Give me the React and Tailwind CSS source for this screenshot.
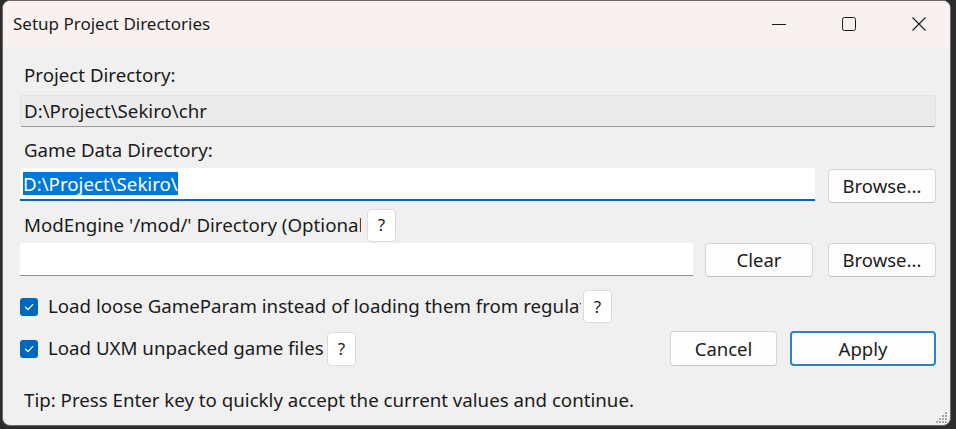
import React from "react";

const font = { fontFamily: '"Noto Sans", "Open Sans", sans-serif' };

function Btn({ children, className = "" }) {
  return (
    <div
      className={
        "flex items-center justify-center rounded-[4px] border border-[#d6d6d6] border-b-[#c4c4c4] bg-[#fdfdfd] text-[18.5px] text-[#1b1b1b] " +
        className
      }
    >
      {children}
    </div>
  );
}

function Help({ className = "" }) {
  return (
    <div
      className={
        "flex h-[33px] w-[29px] shrink-0 items-center justify-center rounded-[4px] border border-[#dcdcdc] bg-white text-[17px] text-[#1b1b1b] " +
        className
      }
    >
      ?
    </div>
  );
}

function Check() {
  return (
    <div className="flex h-[18px] w-[18px] shrink-0 items-center justify-center rounded-[3px] bg-[#0067c0]">
      <svg width="12" height="12" viewBox="0 0 12 12" fill="none">
        <path d="M2.5 6.2 L5 8.6 L9.6 3.6" stroke="white" strokeWidth="1.3" strokeLinecap="round" strokeLinejoin="round" />
      </svg>
    </div>
  );
}

export default function App() {
  return (
    <div className="h-[429px] w-[956px] bg-[#2c2c2c] pb-[3px] pl-[2px] pr-[5px]" style={font}>
      <div className="flex h-full flex-col overflow-hidden rounded-[8px] border border-[#6b6b6b] bg-[#f0f0f0]">
        {/* title bar */}
        <div className="flex h-[46px] shrink-0 items-center bg-[#f9f1ef]">
          <div className="pl-[10px] text-[17px] text-[#1b1b1b]">Setup Project Directories</div>
          <div className="ml-auto flex h-full pr-[1px]">
            <div className="flex h-full w-[70px] items-center justify-center pl-[10px]">
              <svg width="16" height="16" viewBox="0 0 16 16">
                <path d="M1 8.5 H15" stroke="#1b1b1b" strokeWidth="1" />
              </svg>
            </div>
            <div className="flex h-full w-[70px] items-center justify-center pl-[10px]">
              <svg width="16" height="16" viewBox="0 0 16 16">
                <rect x="1.5" y="1.5" width="13" height="13" rx="2" fill="none" stroke="#1b1b1b" strokeWidth="1" />
              </svg>
            </div>
            <div className="flex h-full w-[70px] items-center justify-center pl-[10px]">
              <svg width="16" height="16" viewBox="0 0 16 16">
                <path d="M1.5 1.5 L14.5 14.5 M14.5 1.5 L1.5 14.5" stroke="#1b1b1b" strokeWidth="1.1" />
              </svg>
            </div>
          </div>
        </div>

        {/* body */}
        <div className="relative flex flex-1 flex-col pl-[17px] pr-[14px] text-[18.7px] text-[#1b1b1b]">
          <div className="mt-[15px] flex h-[26px] items-center pl-[4px]">Project Directory:</div>
          <div className="mt-[7px] flex h-[32px] items-center rounded-[3px] border border-[#e2e2e2] border-b-[#9a9a9a] bg-[#ebebeb] pl-[3px]">
            D:\Project\Sekiro\chr
          </div>
          <div className="mt-[10px] flex h-[26px] items-center pl-[4px]">Game Data Directory:</div>
          <div className="mt-[5px] flex h-[35px] items-start">
            <div className="flex h-[33px] flex-1 items-center rounded-t-[3px] border-b-2 border-[#0067c0] bg-white pl-[3px]">
              <span className="bg-[#0078d7] leading-[23px] text-white">D:\Project\Sekiro\</span>
            </div>
            <Btn className="ml-[13px] mt-[1px] h-[34px] w-[108px]">Browse...</Btn>
          </div>
          <div className="mt-[7px] flex h-[30px] items-center">
            <span className="w-[341px] shrink-0 overflow-hidden whitespace-nowrap pl-[4px]">ModEngine '/mod/' Directory (Optional)</span>
            <Help className="ml-[6px] h-[30px] w-[24px]" />
          </div>
          <div className="mt-[3px] flex h-[34px] items-start">
            <div className="h-[33px] flex-1 rounded-t-[3px] border-b border-[#8d8d8d] bg-white"></div>
            <Btn className="ml-[12px] h-[34px] w-[108px]">Clear</Btn>
            <Btn className="ml-[15px] h-[34px] w-[108px]">Browse...</Btn>
          </div>
          <div className="mt-[13px] flex h-[33px] items-center">
            <Check />
            <span className="ml-[10px] w-[533px] shrink-0 overflow-hidden whitespace-nowrap">
              Load loose GameParam instead of loading them from regulation
            </span>
            <Help className="ml-[2px]" />
          </div>
          <div className="mt-[8px] flex h-[35px] items-center">
            <Check />
            <span className="ml-[10px] w-[277px] shrink-0 overflow-hidden whitespace-nowrap">Load UXM unpacked game files</span>
            <Help className="ml-[2px] h-[34px]" />
            <Btn className="ml-auto h-[35px] w-[107px]">Cancel</Btn>
            <Btn className="ml-[13px] h-[35px] w-[146px] border-2 !border-[#2f80d0]">Apply</Btn>
          </div>
          <div className="mt-[22px] flex h-[24px] items-center pl-[4px]">
            Tip: Press Enter key to quickly accept the current values and continue.
          </div>
          <svg className="absolute bottom-[2px] right-[2px]" width="12" height="12" viewBox="0 0 12 12">
            <g fill="#a8a8a8">
              <rect x="9" y="1" width="2" height="2" />
              <rect x="6" y="4" width="2" height="2" />
              <rect x="9" y="4" width="2" height="2" />
              <rect x="3" y="7" width="2" height="2" />
              <rect x="6" y="7" width="2" height="2" />
              <rect x="9" y="7" width="2" height="2" />
              <rect x="0" y="10" width="2" height="2" />
              <rect x="3" y="10" width="2" height="2" />
              <rect x="6" y="10" width="2" height="2" />
              <rect x="9" y="10" width="2" height="2" />
            </g>
          </svg>
        </div>
      </div>
    </div>
  );
}
